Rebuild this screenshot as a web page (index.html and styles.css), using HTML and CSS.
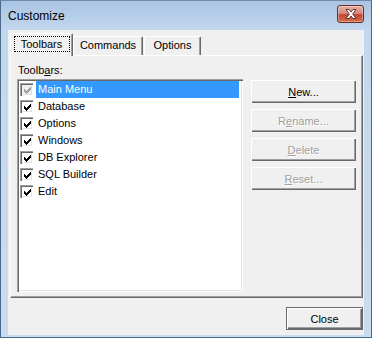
FILE: index.html
```html
<!DOCTYPE html>
<html lang="en">
<head>
    <meta charset="utf-8">
    <link rel="stylesheet" href="styles.css">
    <title>Customize</title>
</head>
<body>
<div class="window">
    <div class="titlebar">
        <span class="title">Customize</span>
        <button class="btnClose" title="Close">
            <svg width="12" height="10" viewBox="0 0 12 10">
                <path d="M1 0.5h3l2 2.5 2-2.5h3l-3.3 4.5 3.3 4.5h-3l-2-2.5-2 2.5h-3l3.3-4.5z"
                      fill="#fff" stroke="#5a3a36" stroke-width="1"/>
            </svg>
        </button>
    </div>
    <div class="client">
        <div class="tabs">
            <div class="tab active"><span class="focus">Toolbars</span></div>
            <div class="tab tabCommands">Commands</div>
            <div class="tab tabOptions">Options</div>
        </div>
        <div class="page">
            <div class="label">Toolb<u>a</u>rs:</div>
            <div class="pageBody">
                <div class="listbox">
                    <div class="item">
                        <span class="check disabled"><svg viewBox="0 0 7 7"><path d="M0 2h1v1h1v1h1v-1h1v-1h1v-1h1v-1h1v3h-1v1h-1v1h-1v1h-1v1h-1v-1h-1v-1h-1z"/></svg></span>
                        <span class="text selected">Main Menu</span>
                    </div>
                    <div class="item">
                        <span class="check"><svg viewBox="0 0 7 7"><path d="M0 2h1v1h1v1h1v-1h1v-1h1v-1h1v-1h1v3h-1v1h-1v1h-1v1h-1v1h-1v-1h-1v-1h-1z"/></svg></span>
                        <span class="text">Database</span>
                    </div>
                    <div class="item">
                        <span class="check"><svg viewBox="0 0 7 7"><path d="M0 2h1v1h1v1h1v-1h1v-1h1v-1h1v-1h1v3h-1v1h-1v1h-1v1h-1v1h-1v-1h-1v-1h-1z"/></svg></span>
                        <span class="text">Options</span>
                    </div>
                    <div class="item">
                        <span class="check"><svg viewBox="0 0 7 7"><path d="M0 2h1v1h1v1h1v-1h1v-1h1v-1h1v-1h1v3h-1v1h-1v1h-1v1h-1v1h-1v-1h-1v-1h-1z"/></svg></span>
                        <span class="text">Windows</span>
                    </div>
                    <div class="item">
                        <span class="check"><svg viewBox="0 0 7 7"><path d="M0 2h1v1h1v1h1v-1h1v-1h1v-1h1v-1h1v3h-1v1h-1v1h-1v1h-1v1h-1v-1h-1v-1h-1z"/></svg></span>
                        <span class="text">DB Explorer</span>
                    </div>
                    <div class="item">
                        <span class="check"><svg viewBox="0 0 7 7"><path d="M0 2h1v1h1v1h1v-1h1v-1h1v-1h1v-1h1v3h-1v1h-1v1h-1v1h-1v1h-1v-1h-1v-1h-1z"/></svg></span>
                        <span class="text">SQL Builder</span>
                    </div>
                    <div class="item">
                        <span class="check"><svg viewBox="0 0 7 7"><path d="M0 2h1v1h1v1h1v-1h1v-1h1v-1h1v-1h1v3h-1v1h-1v1h-1v1h-1v1h-1v-1h-1v-1h-1z"/></svg></span>
                        <span class="text">Edit</span>
                    </div>
                </div>
                <div class="actions">
                    <button class="btn"><u>N</u>ew...</button>
                    <button class="btn" disabled>R<u>e</u>name...</button>
                    <button class="btn" disabled><u>D</u>elete</button>
                    <button class="btn" disabled><u>R</u>eset...</button>
                </div>
            </div>
        </div>
        <div class="footer">
            <button class="btn btnDefault">Close</button>
        </div>
    </div>
</div>
</body>
</html>
```

FILE: styles.css
```css
html, body { margin: 0; padding: 0; background: #fff; }
body { font-family: "Liberation Sans", Arial, sans-serif; font-size: 11px; color: #000; }

/* window frame */
.window {
    width: 372px; height: 338px; box-sizing: border-box;
    display: flex; flex-direction: column;
    padding: 0 7px 2px 7px;
    border: 1px solid #4a6a8c; border-top-color: #6f8cab;
    background: linear-gradient(to bottom, #a9c4e3 0, #c3d7ee 30px, #c9dbf0 100%);
}
.titlebar { height: 29px; display: flex; align-items: flex-start; justify-content: space-between; }
.title { font-size: 12px; margin-top: 8px; color: #000; }
.btnClose {
    width: 27px; height: 18px; margin: 4px 0 0 0; padding: 0;
    display: flex; align-items: center; justify-content: center;
    border: 1px solid #6b2b22; border-radius: 3px;
    background: linear-gradient(to bottom, #e6aea4 0, #d88a7c 45%, #c3452f 55%, #d2704f 100%);
    box-shadow: inset 0 0 0 1px rgba(255, 255, 255, .35);
}

.client {
    flex: 1; display: flex; flex-direction: column;
    background: #f0f0f0; padding: 3px 0 0 2px;
}

/* tabs */
.tabs { display: flex; align-items: flex-end; height: 22px; position: relative; z-index: 1; }
.tab {
    box-sizing: border-box; height: 19px; line-height: 16px; text-align: center;
    border: 1px solid; border-color: #fff #696969 transparent #fff; border-bottom: 0;
    border-radius: 2px 2px 0 0;
    box-shadow: inset -1px 0 #a0a0a0;
    background: #f0f0f0;
}
.tab.active { height: 23px; width: 63px; margin-bottom: -1px; padding-top: 2px; }
.tabCommands { width: 70px; }
.tabOptions { width: 57px; margin-left: 1px; }
.focus { display: inline-block; width: 56px; height: 16px; line-height: 15px; box-sizing: border-box; border: 1px dotted #000; }

/* property page */
.page {
    height: 243px; box-sizing: border-box; margin-right: 1px;
    border: 1px solid; border-color: #fff #696969 #696969 #fff;
    box-shadow: inset -1px -1px #a0a0a0;
    padding: 8px 6px 0 6px;
}
.label { line-height: 13px; padding-left: 1px; margin-bottom: 2px; }
.pageBody { display: flex; gap: 8px; }

.listbox {
    width: 227px; height: 213px; box-sizing: border-box;
    padding: 2px; background: #fff;
    box-shadow: inset 1px 1px #a0a0a0, inset 2px 2px #696969, inset -1px -1px #fff, inset -2px -2px #e3e3e3;
}
.item { display: flex; height: 17px; align-items: center; padding-left: 1px; }
.check {
    width: 13px; height: 13px; box-sizing: border-box; flex: none;
    display: flex; align-items: center; justify-content: center;
    background: #fff;
    box-shadow: inset 1px 1px #a0a0a0, inset 2px 2px #696969, inset -1px -1px #fff, inset -2px -2px #e3e3e3;
}
.check svg { width: 7px; height: 7px; fill: #000; margin: 1px 0 0 1px; shape-rendering: crispEdges; }
.check.disabled { background: #f0f0f0; }
.check.disabled svg { fill: #a0a0a0; }
.text { margin-left: 3px; padding-left: 2px; height: 17px; line-height: 17px; }
.text.selected { flex: 1; margin-right: 2px; background: #3399ff; color: #fff; }

/* buttons */
.actions { display: flex; flex-direction: column; gap: 6px; margin-top: 1px; }
.btn {
    width: 105px; height: 23px; padding: 0; box-sizing: border-box;
    font-family: inherit; font-size: 11px; color: #000;
    background: #f0f0f0; border: 0;
    box-shadow: inset 1px 1px #fff, inset -1px -1px #696969, inset -2px -2px #a0a0a0;
}
.btn:disabled { color: #a0a0a0; text-shadow: 1px 1px #fff; }
.footer { display: flex; justify-content: flex-end; padding: 9px 1px 0 0; }
.btnDefault { width: 77px; border: 1px solid #696969; }
```
